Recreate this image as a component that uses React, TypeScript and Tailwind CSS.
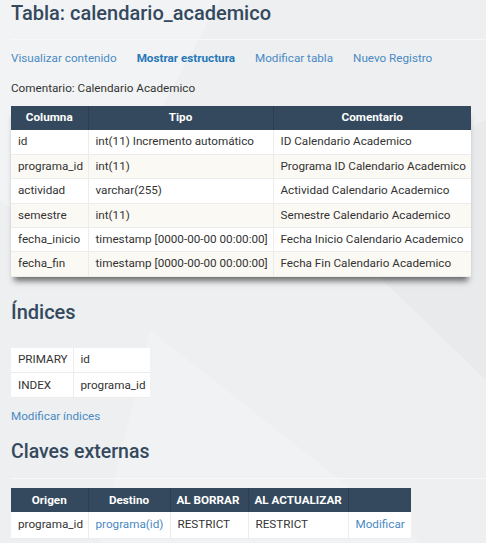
import React from "react";

const campos = [
    { col: "id", tipo: "int(11) Incremento automático", com: "ID Calendario Academico" },
    { col: "programa_id", tipo: "int(11)", com: "Programa ID Calendario Academico" },
    { col: "actividad", tipo: "varchar(255)", com: "Actividad Calendario Academico" },
    { col: "semestre", tipo: "int(11)", com: "Semestre Calendario Academico" },
    { col: "fecha_inicio", tipo: "timestamp [0000-00-00 00:00:00]", com: "Fecha Inicio Calendario Academico" },
    { col: "fecha_fin", tipo: "timestamp [0000-00-00 00:00:00]", com: "Fecha Fin Calendario Academico" },
];

const th = "bg-[#34495e] text-white font-bold text-[11.7px] h-[24px] px-[6px] text-center whitespace-nowrap border-r border-[#2c3e50] last:border-r-0";
const td = "h-[24.4px] px-[7px] border-r border-b border-[#ececec] last:border-r-0 whitespace-nowrap";

export default function App() {
    return (
        <div
            className="relative min-h-[543px] w-[486px] overflow-hidden bg-[#edeff0] text-[11.7px] text-[#333] pl-[11px]"
            style={{ fontFamily: "Roboto, 'Liberation Sans', sans-serif" }}
        >
            {/* faint background shapes */}
            <svg className="absolute inset-0 pointer-events-none" width="486" height="543">
                <polygon points="0,0 220,0 80,260 0,200" fill="#f2f3f4" />
                <polygon points="300,200 486,120 486,380" fill="#e8eaeb" />
                <polygon points="150,330 420,543 100,543" fill="#f1f2f3" />
            </svg>

            <div className="relative">
                <h2 className="text-[20px] leading-[26px] font-medium text-[#34495e]">
                    Tabla: calendario_academico
                </h2>
                <div className="mt-[13px] border-t border-[#f7f8f8]" />

                {/* Nav */}
                <div className="flex gap-[20px] mt-[10px] h-[18px] items-center">
                    <a className="text-[#4a8ac4]">Visualizar contenido</a>
                    <a className="text-[#2678b8] font-bold">Mostrar estructura</a>
                    <a className="text-[#4a8ac4]">Modificar tabla</a>
                    <a className="text-[#4a8ac4]">Nuevo Registro</a>
                </div>

                <p className="mt-[11px] h-[18px] leading-[18px]">Comentario: Calendario Academico</p>

                {/* Estructura */}
                <table className="mt-[9px] w-[460px] table-fixed border-collapse bg-white shadow-[0_7px_6px_-3px_rgba(0,0,0,0.55)]">
                    <thead>
                        <tr>
                            <th className={`${th} w-[77px]`}>Columna</th>
                            <th className={`${th} w-[185px]`}>Tipo</th>
                            <th className={th}>Comentario</th>
                        </tr>
                    </thead>
                    <tbody>
                        {campos.map((c, i) => (
                            <tr key={c.col} className={i % 2 ? "bg-[#fbf9f4]" : "bg-white"}>
                                <td className={td}>{c.col}</td>
                                <td className={td}>{c.tipo}</td>
                                <td className={td}>{c.com}</td>
                            </tr>
                        ))}
                    </tbody>
                </table>

                <h3 className="mt-[21px] text-[20px] leading-[28px] font-medium text-[#34495e]">Índices</h3>

                <table className="mt-[22px] w-[139px] table-fixed border-collapse bg-white">
                    <tbody>
                        <tr>
                            <td className={`${td} h-[25px] w-[62px]`}>PRIMARY</td>
                            <td className={`${td} h-[25px]`}>id</td>
                        </tr>
                        <tr>
                            <td className={`${td} h-[25px]`}>INDEX</td>
                            <td className={`${td} h-[25px]`}>programa_id</td>
                        </tr>
                    </tbody>
                </table>

                <p className="mt-[9px] h-[18px] leading-[18px] text-[#4a8ac4]">Modificar índices</p>

                <h3 className="mt-[13px] text-[19.5px] leading-[28px] font-medium text-[#34495e]">Claves externas</h3>
                <div className="mt-[12px] border-t border-[#f7f8f8]" />

                <table className="mt-[9px] w-[400px] table-fixed border-collapse bg-white">
                    <thead>
                        <tr>
                            <th className={`${th} w-[77px]`}>Origen</th>
                            <th className={`${th} w-[82px]`}>Destino</th>
                            <th className={`${th} w-[78px] !text-left`}>AL BORRAR</th>
                            <th className={`${th} w-[100px] !text-left`}>AL ACTUALIZAR</th>
                            <th className={th}></th>
                        </tr>
                    </thead>
                    <tbody>
                        <tr>
                            <td className={`${td} h-[26px]`}>programa_id</td>
                            <td className={`${td} text-[#4a8ac4]`}>programa(id)</td>
                            <td className={td}>RESTRICT</td>
                            <td className={td}>RESTRICT</td>
                            <td className={`${td} text-[#4a8ac4]`}>Modificar</td>
                        </tr>
                    </tbody>
                </table>
            </div>
        </div>
    );
}
